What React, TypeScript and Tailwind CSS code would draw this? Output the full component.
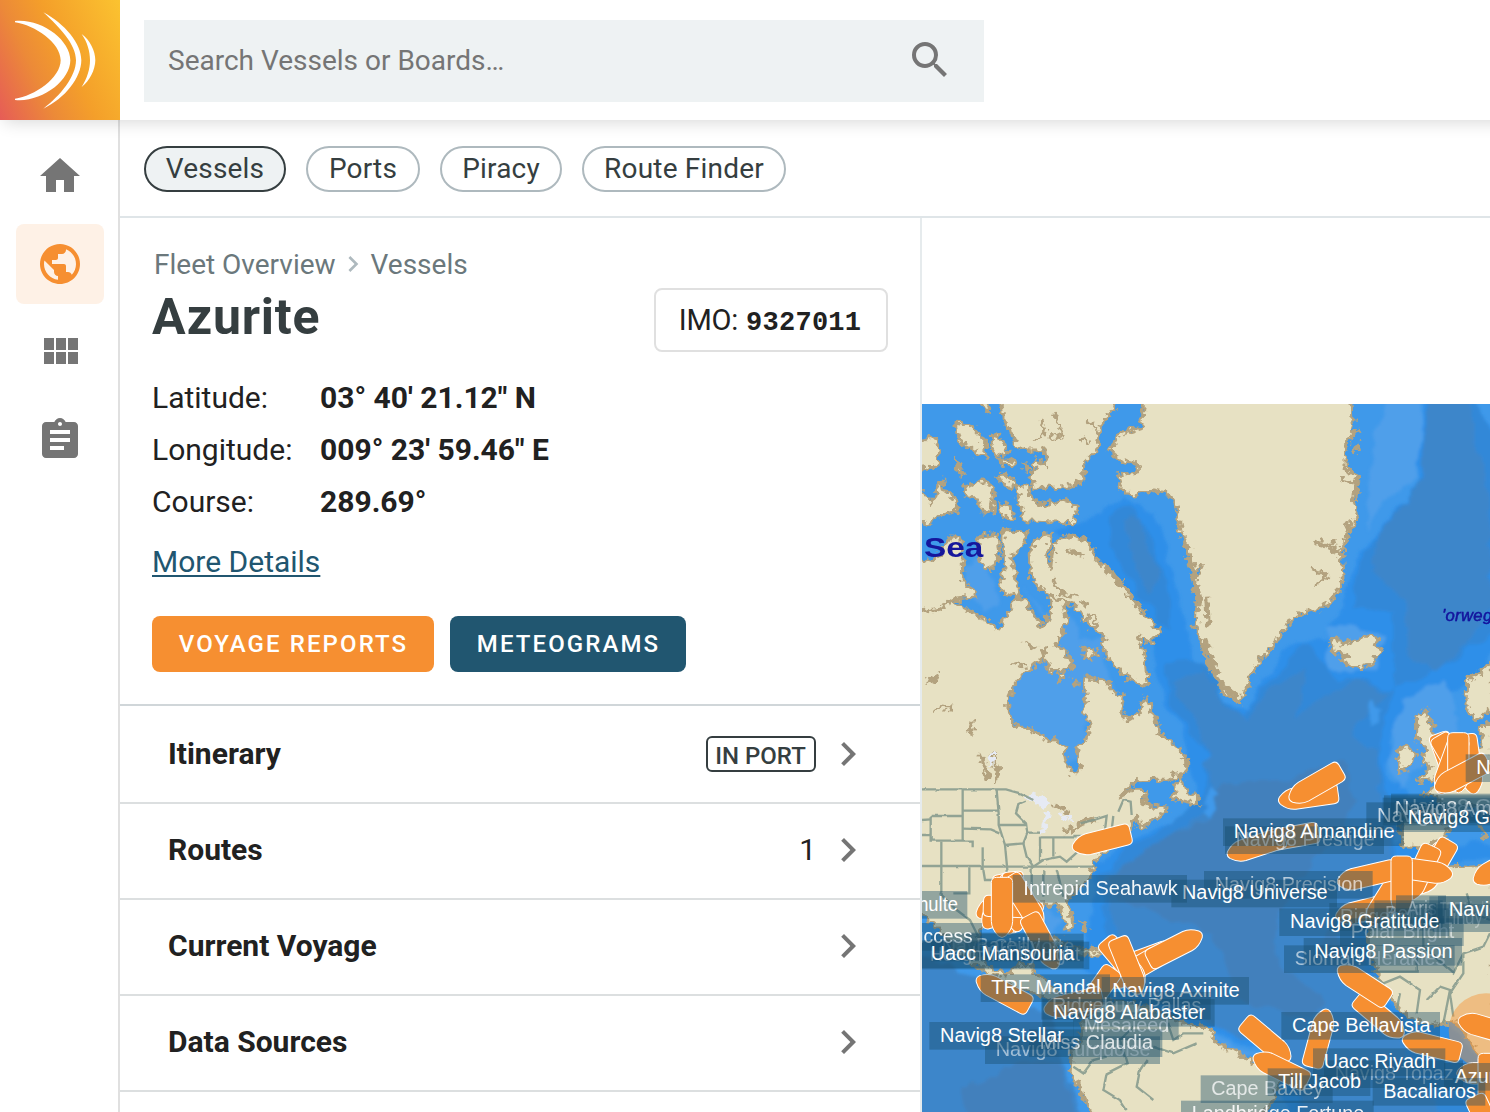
import React from 'react';
import { MdAssignment, MdChevronRight, MdHome, MdPublic, MdSearch } from 'react-icons/md';

// [x, y, rotation] on the chart's own grid; 0 degrees points the bow south.
const ships: [number, number, number][] = [
  [545, 1322, 76], [1165, 1190, 82], [1187, 1154, 60], [1108, 1312, 80], [1008, 1338, 72],
  [1585, 1085, -20], [1600, 1085, -30], [1650, 1092, -8], [1590, 1097, 20], [1615, 1088, 0], [1625, 1125, 62],
  [1740, 1400, 60], [1515, 1410, 42], [1545, 1400, 30], [1500, 1420, 25], [1508, 1412, -82],
  [1335, 1530, 76], [1395, 1500, 32], [1340, 1428, 77], [1445, 1458, 0],
  [250, 1505, 62], [245, 1510, 35], [265, 1510, -12], [270, 1512, 2], [285, 1505, -5], [280, 1520, -88], [315, 1505, -32],
  [367, 1625, -28], [246, 1522, 0], [250, 1777, 118],
  [665, 1680, 70], [640, 1710, 60], [612, 1688, -40], [530, 1780, 35], [460, 1810, 76], [765, 1642, -117], [625, 1698, -22],
  [1380, 1850, -50], [1330, 1752, 123], [1535, 1938, 104], [1040, 1922, -50], [1082, 2008, 116], [1198, 1915, -165],
  [1702, 1884, 106], [1700, 2020, 90], [1706, 2050, 0], [1700, 2170, -25],
];

// text, left, baseline, width, text opacity
const labels: [string, number, number, number, number][] = [
  ['Navig8 Prestige', 947, 1338, 417, 0.55],
  ['Navig8 Almandine', 941, 1314, 483, 1],
  ['Navig8 Ammolite', 1420, 1252, 450, 0.4],
  ['Navig8 Guard', 1445, 1240, 400, 0.5],
  ['Navig8', 1371, 1266, 190, 0.75],
  ['Navig8 Amber', 1424, 1245, 380, 0.8],
  ['Navig8 Goal', 1463, 1272, 326, 1],
  ['Nord', 1669, 1122, 130, 1],
  ['Navig8 Precision', 884, 1472, 446, 0.65],
  ['Navig8 Universe', 786, 1498, 437, 1],
  ['Intrepid Seahawk', 310, 1484, 463, 0.95],
  ['Schulte', -70, 1532, 184, 1],
  ['Nave Charlotte', 65, 1660, 398, 0.5],
  ['Bareilly', 168, 1657, 192, 0.5],
  ['Hoegh Infinity Light', 30, 1684, 450, 0.45],
  ['Success', -60, 1628, 218, 0.95],
  ['Uacc Mansouria', 32, 1680, 431, 1],
  ['TRF Mandal', 214, 1782, 328, 1],
  ['Navig8 Axinite', 577, 1790, 382, 1],
  ['Ridgebury Pallas', 396, 1835, 448, 0.5],
  ['Mesaieed', 491, 1896, 257, 0.75],
  ['Navig8 Alabaster', 399, 1856, 457, 1],
  ['Navig8 Turquoise', 227, 1968, 465, 0.55],
  ['Miss Claudia', 359, 1947, 340, 0.8],
  ['Navig8 Stellar', 60, 1925, 372, 1],
  ['Ridgebury', 1260, 1568, 260, 0.45],
  ['Berlin', 1395, 1560, 145, 0.4],
  ['Aris', 1460, 1545, 90, 0.4],
  ['TRF Lindy', 1560, 1548, 148, 0.35],
  ['Polar Bright', 1292, 1614, 311, 0.6],
  ['Lindy', 1570, 1572, 118, 0.35],
  ['Navig8 Gratitude', 1110, 1584, 449, 1],
  ['Navig8', 1586, 1547, 190, 1],
  ['Sloman Herakles', 1124, 1695, 452, 0.6],
  ['Navig8 Passion', 1183, 1673, 415, 1],
  ['Cape Bellavista', 1116, 1895, 416, 1],
  ['Navig8 Topaz', 1244, 2040, 357, 0.45],
  ['Uacc Riyadh', 1211, 2004, 337, 1],
  ['Azurite', 1604, 2048, 185, 1],
  ['Cape Baxley', 874, 2085, 336, 0.75],
  ['Till Jacob', 1075, 2064, 248, 1],
  ['Bacaliaros', 1390, 2093, 278, 1],
  ['Landbridge Fortune', 815, 2161, 518, 0.9],
];

const land = [
  // North America
  'M-20 642 60 625 100 600 130 625 190 655 240 690 250 660 278 612 300 590 330 620 350 660 370 680 388 640 390 590 430 600 443 650 425 705 405 735 425 745 462 790 445 808 390 815 378 790 375 745 365 780 340 800 310 820 280 860 262 900 265 940 290 982 320 982 370 1012 430 1030 438 1085 462 1122 482 1108 475 1070 470 1040 505 1010 510 970 487 930 500 900 490 860 495 832 550 840 580 870 610 890 605 930 622 960 655 940 668 900 678 893 700 940 720 1000 770 1042 800 1080 800 1110 745 1140 650 1142 595 1195 640 1170 680 1172 670 1210 695 1222 738 1220 740 1235 700 1262 660 1282 652 1255 640 1265 630 1290 600 1330 545 1360 525 1385 515 1420 500 1445 470 1470 440 1500 455 1550 460 1590 440 1590 422 1525 400 1512 360 1515 300 1530 250 1540 200 1560 180 1600 170 1640 200 1700 260 1725 300 1690 335 1692 345 1720 385 1745 425 1790 480 1805 500 1835 480 1840 400 1800 300 1765 200 1720 120 1660 60 1590 -20 1520Z',
  // South America
  'M490 1840 560 1802 640 1810 700 1830 790 1868 868 1885 890 1930 950 1955 1000 1985 1060 1995 1082 2030 1060 2100 1020 2150 520 2150 490 2090 450 2015 455 1960 480 1925Z',
  // Greenland
  'M672 -10 665 80 600 102 565 150 600 180 655 195 655 215 590 225 605 270 640 288 700 270 740 280 765 310 780 380 800 450 810 510 850 500 820 560 835 610 825 680 845 730 870 800 910 880 960 908 980 860 1010 790 1060 740 1092 690 1120 650 1140 640 1210 625 1255 575 1270 545 1265 480 1270 430 1300 380 1315 340 1300 310 1310 235 1275 200 1275 160 1300 80 1295 -10Z',
  // Baffin Island
  'M455 408 500 420 530 480 590 540 640 600 700 670 722 695 690 730 655 705 680 790 684 860 620 832 565 780 545 732 555 712 500 670 470 620 380 580 332 535 328 465 350 412 395 403 380 470 392 505 400 430 440 408Z',
  // Arctic archipelago
  'M240 -10 600 -10 560 55 540 90 530 150 490 190 492 240 440 265 400 262 340 262 330 235 350 175 380 200 375 150 330 150 290 140 270 90 250 60Z',
  'M285 252 328 260 333 300 380 315 430 295 472 322 462 368 310 362 300 310Z',
  'M108 70 150 75 200 130 195 175 150 145 120 125Z', 'M215 105 245 115 265 160 235 170 213 140Z',
  'M180 -10 210 -10 205 38 188 20Z', 'M-20 130 45 110 58 145 50 200 -20 210Z',
  'M240 180 285 180 280 197 245 195Z', 'M230 225 260 222 285 250 280 268 240 245Z',
  'M105 180 130 215 120 225Z', 'M315 188 328 205 318 213Z',
  'M130 250 150 262 180 240 210 250 222 290 215 340 185 335 175 295 140 290Z',
  'M-20 280 20 285 40 310 50 255 68 240 75 275 105 290 112 335 60 345 20 370 -20 375Z',
  'M240 310 270 318 282 355 262 360 240 335Z',
  'M-20 475 45 482 95 408 122 415 130 540 172 590 100 598 60 625 -20 635Z',
  'M172 410 230 400 238 470 210 515 180 480Z', 'M250 388 325 395 300 450 275 470 298 580 290 592 245 575 240 540 255 500 248 430Z',
  'M505 645 532 655 525 680 505 675Z', 'M490 745 520 745 530 770 498 778Z', 'M412 825 432 818 435 832 415 842Z', 'M462 838 472 855 460 855Z',
  'M780 1125 800 1180 835 1190 835 1215 800 1205 755 1195Z',
  // Caribbean
  'M340 1600 410 1615 440 1640 370 1630Z', 'M460 1640 530 1650 540 1665 480 1665Z', 'M480 1565 500 1580 495 1590Z',
  // Iceland
  'M1232 720 1255 712 1262 735 1300 722 1340 708 1365 710 1382 750 1358 790 1320 806 1285 795 1262 780 1280 765 1240 755Z',
  // Britain, Ireland and the European mainland
  'M1490 950 1520 925 1525 960 1545 975 1535 1010 1560 1060 1580 1095 1560 1130 1495 1145 1530 1100 1505 1085 1520 1050 1490 1010Z',
  'M1430 1055 1460 1035 1485 1060 1480 1095 1430 1118 1440 1080Z',
  'M1720 780 1680 820 1640 840 1638 920 1665 958 1720 930Z', 'M1720 970 1685 975 1682 1040 1640 1100 1600 1140 1510 1180 1560 1200 1565 1230 1450 1230 1442 1290 1450 1340 1520 1345 1575 1310 1620 1230 1650 1215 1690 1225 1720 1250Z',
  // Africa
  'M1440 1430 1500 1405 1600 1400 1720 1395 1720 2150 1695 2000 1650 1925 1610 1862 1540 1877 1460 1850 1400 1780 1370 1710 1345 1650 1345 1600 1400 1510Z',
];

const borders = [
  'M6 1168H258L300 1180 340 1200', 'M128 1170V1322', 'M230 1170 236 1240 236 1275 255 1335 262 1410', 'M128 1232H234', 'M128 1286 210 1288 238 1300',
  'M32 1248H128M32 1248V1322H158V1342', 'M6 1260 32 1258M6 1305H32', 'M64 1325V1480', 'M188 1345V1410', 'M6 1398H190', 'M148 1402V1480H100', 'M190 1400H525',
  'M236 1275H318M255 1335 310 1330 322 1300 318 1270 288 1240 295 1215 318 1205', 'M322 1298H360', 'M360 1310V1385', 'M400 1312V1370', 'M310 1330 320 1370 340 1400 370 1380 420 1370 440 1385 490 1340', 'M362 1312H470', 'M460 1308H560', 'M480 1270 520 1260 560 1248 555 1290', 'M580 1248 575 1290', 'M595 1235 610 1200 632 1205 635 1245',
  'M190 1410 195 1440H260', 'M260 1410V1470', 'M335 1400V1480', 'M370 1410V1490', 'M410 1410 430 1490', 'M60 1480 110 1530 150 1560 175 1610',
  'M640 1880 600 1920 620 1990 560 2020 550 2070 600 2100 620 2130', 'M680 1980 660 2010 650 2060 700 2100', 'M740 1860 760 1920 790 1900 850 1900', 'M460 2000 490 2020 520 1980 560 1970', 'M700 1940 760 1960 830 1930',
  'M1350 1715H1490V1640', 'M1360 1730 1390 1750 1440 1730 1500 1770 1490 1840', 'M1510 1560V1640L1600 1720 1630 1660 1690 1640 1710 1600', 'M1630 1660V1720L1590 1780 1600 1850', 'M1520 1800 1560 1760 1590 1770 1570 1870', 'M1440 1780 1430 1830', 'M1640 1480 1660 1540 1710 1560',
];

function FleetMap() {
  return (
    <svg className="block h-[708px] w-[568px]" viewBox="6 12 1704 2124" aria-label="Fleet map">
      <defs>
        <filter id="coast" x="-5%" y="-5%" width="110%" height="110%">
          <feTurbulence type="fractalNoise" baseFrequency="0.055" numOctaves="2" seed="11" />
          <feDisplacementMap in="SourceGraphic" scale="36" xChannelSelector="R" yChannelSelector="G" />
          <feGaussianBlur stdDeviation="1.8" />
        </filter>
        <filter id="shelf" x="-5%" y="-5%" width="110%" height="110%">
          <feTurbulence type="fractalNoise" baseFrequency="0.014" numOctaves="3" seed="3" />
          <feDisplacementMap in="SourceGraphic" scale="50" xChannelSelector="R" yChannelSelector="G" />
          <feGaussianBlur stdDeviation="4" />
        </filter>
        <filter id="lines" x="-5%" y="-5%" width="110%" height="110%">
          <feTurbulence type="fractalNoise" baseFrequency="0.03" numOctaves="2" seed="5" />
          <feDisplacementMap in="SourceGraphic" scale="8" xChannelSelector="R" yChannelSelector="G" />
          <feGaussianBlur stdDeviation="1.5" />
        </filter>
        <filter id="soft"><feGaussianBlur stdDeviation="1.8" /></filter>
      </defs>
      <rect x="0" y="12" width="1720" height="2130" fill="#3f99ea" />
      <g filter="url(#shelf)">
        <path fill="#2f8fe9" d="M400 385 530 350 600 300 700 330 760 500 790 650 830 780 900 900 980 930 1040 820 1120 740 1220 720 1260 600 1340 440 1490 250 1510-20H1650L1760 150V720L1620 880 1470 930 1400 1030 1400 1130 1470 1170 1440 1200 1430 1330 1720 1330V1390H1450L1340 1600 1400 1780 1480 1860H1600L1760 2160H1100L1080 1980 880 1890 740 1830 560 1790 480 1690 520 1540 530 1390 700 1290 840 1230 790 1000 740 920 700 760 600 560 500 450Z" />
        <path fill="#3188d8" d="M565 350 620 325 680 370 720 480 750 600 750 690 690 630 620 520 570 440ZM740 800 800 770 860 800 910 900 970 950 1040 850 1150 740 1250 830 1330 840 1400 870 1600 790 1720 700V100L1660-20H1515L1510 220 1350 440 1310 540 1290 620 1420 640 1420 880 1370 1040 1400 1180 1430 1340 1380 1480 1330 1620 1390 1790 1480 1890 1650 2000 1700 2160H1130L1100 1960 880 1860 700 1780 570 1700 540 1420 720 1290 850 1200 870 1080 760 930Z" />
        <path fill="#3c86ca" d="M620 360 660 350 680 430 715 500 700 590 650 520ZM1520-20H1640L1700 260 1720 600 1640 740 1540 820 1460 760 1460 600 1400 560 1355 520 1380 400 1510 230ZM760 840 840 800 920 920 980 960 1060 860 1160 800 1120 960 1300 840 1400 880 1300 1000 1370 1060 1380 1200 1420 1320 1380 1450 1310 1620 1360 1780 1440 1900 1560 2160H1160L1080 1940 820 1850 600 1740 560 1430 760 1300 880 1220 860 1060Z" />
        <path fill="#4280bc" d="M570 1430 700 1330 880 1250 890 1150 1090 1140 1270 1080 1310 1200 1260 1300 1180 1380 1100 1500 1060 1600 1080 1700 1220 1800 1180 1860 950 1800 880 1600 700 1540 600 1500ZM1240 1580 1300 1680 1310 1780 1200 1640Z" />
        <path fill="#3c86ca" d="M-30 1640 200 1760 400 1850 440 2020 500 2170H-30Z" />
        <path fill="#4280bc" d="M120 2070 300 1980 420 1990 470 2150H150Z" />
        <path fill="#4f9fea" d="M130 500 200 480 240 600 180 640 130 560ZM300 560 360 640 450 640 480 720 560 700 540 800 610 900 500 840 500 1080 430 1100 260 1000 250 850 420 700ZM1400-20 1490-20 1510 100 1480 240 1400 300 1340 380 1350 200ZM1230 680 1400 700 1370 820 1220 800ZM1450 900 1580 840 1620 950 1600 1040 1440 1160 1400 1070ZM360 1530 430 1560 400 1620 350 1590ZM840 1890 900 1910 1030 1980 950 1970Z" />
        <path fill="#3f99ea" d="M1350 900 1385 925 1370 970 1345 990ZM870 1160 895 1180 870 1250 850 1240Z" />
      </g>
      <g filter="url(#coast)">
        <g fill="#e7e1c3" stroke="#b3a27f" strokeWidth="9" strokeLinejoin="round">
          {land.map((d) => <path key={d} d={d} />)}
        </g>
        <g fill="none" stroke="#b3a27f" strokeWidth="9">
          <path d="M400 40 430 100 390 120M360 60 375 95 350 120M500 60 530 90M480 110 510 130M800 440 820 500M1290 100 1320 90M1320 130 1300 160M1260 240 1310 250 1312 300M1190 420 1250 450 1290 420M1170 500 1220 530 1180 560M560 500 620 570 650 620M440 450 500 470M280 790 320 800M310 725 350 745M500 620 480 600M15 850 60 825M35 935 60 920 100 925M150 1000 160 960M180 1060 200 1130M215 1060 235 1140M400 540 420 580 470 590" />
          <path strokeWidth="15" d="M15 848 60 825M150 1000 160 962M182 1065 208 1140M228 1095 236 1140M430 1300 480 1272 520 1256M400 1215 440 1235M795 420 820 520 840 600M860 590 865 680M850 720 900 850 960 900M600 540 640 600M1190 440 1250 425M1230 450 1275 470M1290 360 1280 400M1560 1230 1570 1270M1680 1270 1700 1320" />
        </g>
        <g fill="#e6eaf4"><path d="M315 1200 350 1178 395 1210 365 1222ZM375 1232 392 1235 370 1310 358 1300ZM420 1240 460 1250 440 1265ZM205 1065 220 1060 215 1110Z" /></g>
      </g>
      <g fill="none" stroke="#84998c" strokeWidth="7" opacity=".85" filter="url(#lines)">
        {borders.map((d) => <path key={d} d={d} />)}
      </g>
      <g fill="#14149c" fontFamily="Liberation Sans, sans-serif" filter="url(#soft)">
        <text x="12" y="470" fontSize="83" fontWeight="700" textLength="178" lengthAdjust="spacingAndGlyphs">Sea</text>
        <text x="1566" y="662" fontSize="50" fontStyle="italic" stroke="#14149c" strokeWidth="1.5" textLength="220">'orwegian</text>
      </g>
      <circle cx="1698" cy="1892" r="112" fill="#f79232" opacity=".45" />
      <g fill="#f68f31" stroke="#fff" strokeWidth="3">
        {ships.map(([x, y, r]) => (
          <path key={`${x}-${y}`} transform={`translate(${x} ${y}) rotate(${r})`} d="M-32-74Q-32-90-16-90H16Q32-90 32-74V42Q31 66 11 86Q0 95-11 86Q-31 66-32 42Z" />
        ))}
      </g>
      <g fontFamily="Liberation Sans, sans-serif" fontSize="58">
        {labels.map(([text, x, y, w, o]) => (
          <g key={`${text}-${x}`}>
            <rect x={x - 32} y={y - 59} width={w + 60} height="83" fill="#164a68" opacity=".4" />
            <text x={x} y={y} textLength={w} lengthAdjust="spacingAndGlyphs" fill="#fff" opacity={o}>{text}</text>
          </g>
        ))}
      </g>
    </svg>
  );
}

function Logo() {
  return (
    <div className="flex size-[120px] shrink-0 bg-[linear-gradient(65deg,#e65c57_0%,#ec8a38_32%,#f49f2a_55%,#fbc330_100%)]">
      <svg viewBox="0 0 360 360" className="size-[120px]" fill="#fff">
        <path d="M45 63C125 55 211 120 211 181S125 308 45 300V296C103 289 182 234 182 181S105 76 45 67Z" />
        <path d="M130 37C195 72 244 130 244 181S195 296 130 326C181 287 228 230 228 181S178 82 130 37Z" />
        <path d="M245 102C270 120 286 153 286 181S268 245 245 261C261 236 270 208 270 181S262 127 245 102Z" />
      </svg>
    </div>
  );
}

function Sidebar() {
  return (
    <nav className="flex w-[120px] shrink-0 flex-col items-center gap-2 border-r-2 border-[#e0e0e0] pt-4 text-[#757575]">
      <a className="flex h-20 w-[88px] translate-x-px items-center justify-center"><MdHome size={48} /></a>
      <a className="flex h-20 w-[88px] translate-x-px items-center justify-center rounded-lg bg-[#fef1e6] text-[#f68f31]"><MdPublic size={48} /></a>
      <a className="flex h-20 w-[88px] translate-x-px items-center justify-center">
        <svg viewBox="0 0 24 24" className="size-12" fill="currentColor">
          <path d="M4 11h5V5H4v6zm0 7h5v-6H4v6zm6 0h5v-6h-5v6zm6 0h5v-6h-5v6zm-6-7h5V5h-5v6zm6-6v6h5V5h-5z" />
        </svg>
      </a>
      <a className="flex h-20 w-[88px] translate-x-px items-center justify-center"><MdAssignment size={48} /></a>
    </nav>
  );
}

function Chip({ label, width, active }: { label: string; width: string; active?: boolean }) {
  return (
    <button className={`${width} h-[46px] rounded-full border-2 text-[28px] leading-[40px] tracking-[0.2px] text-[#353e40] ${active ? 'border-[#353e40] bg-[#eef2f3]' : 'border-[#aeb9be] bg-white'}`}>
      {label}
    </button>
  );
}

function Row({ title, first, children }: { title: string; first?: boolean; children?: React.ReactNode }) {
  return (
    <div className={`flex items-center border-b-2 border-[#dcdfe0] pl-12 pr-12 ${first ? 'h-[98px]' : 'h-24 pb-[2px]'}`}>
      <span className="flex-1 pb-[2px] text-[30px] font-bold text-[#212121]">{title}</span>
      {children}
      <MdChevronRight size={48} className="text-[#757575]" />
    </div>
  );
}

function Detail({ label, value }: { label: string; value: string }) {
  return (
    <div className="flex h-[52px] items-center text-[30px]">
      <span className="w-[168px]">{label}</span>
      <span className="font-bold">{value}</span>
    </div>
  );
}

export default function App() {
  return (
    <div className="flex h-[1112px] w-[1490px] flex-col overflow-hidden bg-white font-[Roboto,sans-serif] text-[#212121]">
      <header className="relative z-10 flex h-[120px] w-[1520px] shrink-0 bg-white shadow-[4px_2px_16px_rgba(0,0,0,0.16)]">
        <Logo />
        <div className="ml-6 mt-5 flex h-[82px] w-[840px] items-center justify-between bg-[#eef2f3] pl-6 pr-[30px] text-[28px] text-[#757575]">
          <span>Search Vessels or Boards…</span>
          <MdSearch size={48} className="-mt-[2px]" />
        </div>
      </header>
      <div className="flex min-h-0 flex-1">
        <Sidebar />
        <main className="flex min-w-0 flex-1 flex-col">
          <div className="flex h-[98px] shrink-0 gap-5 border-b-2 border-[#dfe5e8] pl-6 pt-[26px]">
            <Chip label="Vessels" width="w-[142px]" active />
            <Chip label="Ports" width="w-[114px]" />
            <Chip label="Piracy" width="w-[122px]" />
            <Chip label="Route Finder" width="w-[204px]" />
          </div>
          <div className="flex min-h-0 flex-1">
            <section className="w-[802px] shrink-0 border-r-2 border-[#e6ebed]">
              <div className="h-[486px] px-8 pt-[27px]">
                <div className="flex h-10 items-center pl-[2px] text-[28px] text-[#6b787c]">
                  <span>Fleet Overview</span>
                  <MdChevronRight size={32} className="ml-px mr-[2px] -mt-[2px] text-[#aeb9be]" />
                  <span>Vessels</span>
                </div>
                <div className="flex h-[66px] items-start justify-between">
                  <h1 className="text-[50px] font-bold leading-[64px] tracking-[0.8px] text-[#353e40]">Azurite</h1>
                  <div className="mt-[3px] flex h-16 w-[234px] items-center justify-center rounded-lg border-2 border-[#e0e0e0] pr-[2px] text-[29px] tracking-[-0.2px]">
                    <span className="pt-[2px]">IMO:</span>
                    <span className="ml-2 pt-[6px] font-['Liberation_Mono',monospace] text-[27px] font-bold tracking-[0.25px]">9327011</span>
                  </div>
                </div>
                <div className="mt-5">
                  <Detail label="Latitude:" value={'03° 40\' 21.12" N'} />
                  <Detail label="Longitude:" value={'009° 23\' 59.46" E'} />
                  <Detail label="Course:" value="289.69°" />
                </div>
                <a className="mt-[15px] block h-10 text-[30px] leading-10 text-[#215670] underline decoration-2 underline-offset-[3px]">More Details</a>
                <div className="mt-[34px] flex gap-4 text-2xl font-medium text-white">
                  <button className="h-14 w-[282px] rounded-lg bg-[#f68f31] pl-px tracking-[2.1px]">VOYAGE REPORTS</button>
                  <button className="h-14 w-[236px] rounded-lg bg-[#215670] pl-px tracking-[2.1px]">METEOGRAMS</button>
                </div>
              </div>
              <div className="border-t-2 border-[#d0d6d9]">
                <Row title="Itinerary" first>
                  <span className="mr-2 flex h-9 w-[110px] items-center justify-center rounded-md border-2 border-[#353e40] pr-px pt-[4px] text-2xl font-medium text-[#353e40]">IN PORT</span>
                </Row>
                <Row title="Routes"><span className="mr-2 pb-[2px] text-[30px]">1</span></Row>
                <Row title="Current Voyage" />
                <Row title="Data Sources" />
              </div>
            </section>
            <section className="flex-1 overflow-hidden pt-[186px]">
              <FleetMap />
            </section>
          </div>
        </main>
      </div>
    </div>
  );
}
